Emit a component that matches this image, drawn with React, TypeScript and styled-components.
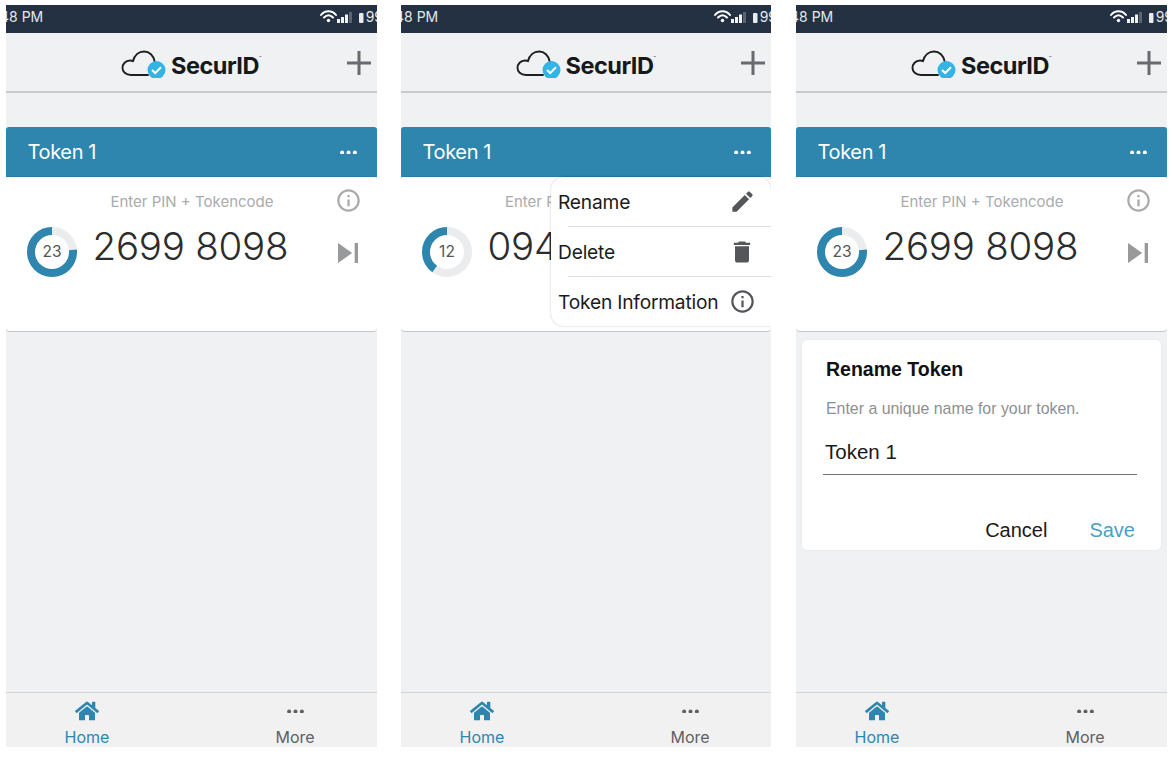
import React from "react";
import styled, { createGlobalStyle } from "styled-components";
import { MdEdit, MdDelete, MdSkipNext, MdInfoOutline } from "react-icons/md";
import { FaHome } from "react-icons/fa";

const Global = createGlobalStyle`
  html, body { margin: 0; padding: 0; background: #fff; }
  body { font-family: "Inter", "Liberation Sans", sans-serif; }
`;

const Page = styled.div`
  width: 1172px; height: 758px; box-sizing: border-box;
  padding: 5px 0 0 6px; display: flex; gap: 24px; overflow: hidden;
`;
const Phone = styled.div`
  position: relative; flex: 0 0 371px; height: 742px; background: #f0f1f3;
  display: flex; flex-direction: column; overflow: hidden;
  &:nth-child(2) { flex-basis: 370px; margin-right: 1px; }
`;
const StatusBar = styled.div`
  flex: 0 0 28px; background: #233143; color: #e4e8ec; font: 400 14px/23px "Inter", sans-serif;
  display: flex; align-items: flex-start; justify-content: space-between; overflow: hidden;
`;
const StatusTime = styled.span`margin-left: -6px;`;
const StatusIcons = styled.div`display: flex; align-items: center; height: 23px; margin-right: -6px; gap: 2px;`;
const Header = styled.div`
  flex: 0 0 58px; display: flex; align-items: center; justify-content: center; position: relative;
  border-bottom: 2px solid #c9cacc;
`;
const Logo = styled.div`display: flex; align-items: center; margin: 7px 0 0 -1px;`;
const LogoSvg = styled.svg`margin-top: -6px; flex: none;`;
const LogoText = styled.span`
  font: 700 23.5px/1 "Inter", sans-serif; color: #17181a; letter-spacing: -.5px; margin-left: 4px;
`;
const Tm = styled.sup`font-size: 4px; font-weight: 400; vertical-align: top; line-height: 8px;`;
const PlusBtn = styled.div`position: absolute; right: 5px; top: 17px; width: 26px; height: 26px; color: #676a6e;`;
const Main = styled.div`flex: 1; padding-top: 34px; display: flex; flex-direction: column;`;
const Card = styled.div`position: relative; display: flex; flex-direction: column;`;
const CardHead = styled.div`
  height: 50px; box-sizing: border-box; background: #2e86ae; color: #fff; border-radius: 3px 3px 0 0;
  display: flex; align-items: center; justify-content: space-between; padding: 0 19px 0 21.500px;
  font: 400 20px/1 "Inter", sans-serif; letter-spacing: -.35px;
`;
const CardBody = styled.div`
  height: 155px; box-sizing: border-box; background: #fff; border-radius: 4px; border-bottom: 1px solid #c6c7c9;
  padding: 12px 17px 0 21px; box-shadow: 0 -1px 1px rgba(0,0,0,.08);
`;
const HintRow = styled.div`display: grid; grid-template-columns: 1fr auto 1fr; align-items: center; height: 24px;`;
const Hint = styled.span`grid-column: 2; font: 400 15px/1 "Inter", sans-serif; color: #aaabad; margin-left: -3px;`;
const InfoSlot = styled.div`grid-column: 3; justify-self: end; color: #a9aaac; display: flex; margin: -2px -2px 0 0;`;
const CodeRow = styled.div`display: flex; align-items: center; margin-top: 14px;`;
const Ring = styled.div`
  display: grid; place-items: center; width: 50px; height: 50px; flex: none;
  & > * { grid-area: 1 / 1; }
`;
const RingNum = styled.span`font: 400 15.5px/1 "Inter", sans-serif; color: #555;`;
const Code = styled.div`
  margin: -11px 0 0 15.500px; flex: 1; font: 300 38.5px/1 "Inter", sans-serif; color: #2c2c2c; letter-spacing: -.25px;
  white-space: nowrap;
`;
const NextSlot = styled.div`color: #97999b; display: flex; margin: 1px -8px 0 0;`;
const Menu = styled.div`
  position: absolute; top: 172px; right: 0; width: 220px; height: 149px; background: #fff;
  border-radius: 13px 13px 0 13px; box-shadow: 0 0 2px rgba(0,0,0,.28);
  display: flex; flex-direction: column;
`;
const MenuItem = styled.div<{ $last?: boolean }>`
  flex: 1; margin-left: 17px; padding: 0 15px 0 0; display: flex; align-items: center; justify-content: space-between;
  border-bottom: ${(p) => (p.$last ? "0" : "1px solid #dcdddf")}; color: #555659;
`;
const MenuLabel = styled.span`margin-left: -10px; font: 400 19.2px/1 "Inter", sans-serif; color: #1b1b1b; letter-spacing: -.2px; padding-top: 2px;`;
const Dialog = styled.div`
  margin: 8px 6px 0; height: 210px; box-sizing: border-box; background: #fff; border-radius: 5px;
  box-shadow: 0 0 2px rgba(0,0,0,.08); padding: 18px 24px 0 24px;
`;
const DialogTitle = styled.div`font: 700 19.5px/1.2 "Liberation Sans", sans-serif; color: #111;`;
const DialogHint = styled.div`font: 400 15.9px/1 "Liberation Sans", sans-serif; color: #8e8f91; margin-top: 20px;`;
const NameField = styled.div`
  margin: 17px 0 0 -3px; height: 41px; box-sizing: border-box; border-bottom: 1px solid #6f7072; padding: 0 2px;
  font: 400 20.5px/35px "Liberation Sans", sans-serif; color: #1a1a1a;
`;
const DialogActions = styled.div`display: flex; justify-content: flex-end; gap: 42px; margin: 45px 2px 0 0;`;
const ActionBtn = styled.span<{ $primary?: boolean }>`
  font: 400 20px/1 "Liberation Sans", sans-serif; color: ${(p) => (p.$primary ? "#4b9fc6" : "#1a1a1a")};
`;
const TabBar = styled.div`
  flex: 0 0 55px; box-sizing: border-box; border-top: 1px solid #d2d3d5; background: #f1f1f2;
  display: flex; gap: 108px; padding-left: 31px;
`;
const Tab = styled.div<{ $active?: boolean }>`
  display: flex; flex-direction: column; align-items: center; width: 100px; height: 100%;
  color: ${(p) => (p.$active ? "#2e86ae" : "#5f6063")};
  font: 400 16px/1 "Inter", sans-serif; justify-content: flex-end; padding-bottom: 2px; box-sizing: border-box;
`;
const TabIcon = styled.div`height: 24px; margin-bottom: 6px; display: flex; align-items: center;`;

const Dots = ({ size = 20, color = "currentColor" }: { size?: number; color?: string }) => (
  <svg width={size} height={size / 4} viewBox="0 0 20 5" fill={color}>
    <circle cx="3.3" cy="2.5" r="2.1" />
    <circle cx="10" cy="2.5" r="2.1" />
    <circle cx="16.7" cy="2.5" r="2.1" />
  </svg>
);

const TimerRing = ({ n }: { n: number }) => (
  <Ring>
    <svg width="50" height="50" viewBox="0 0 50 50">
      <circle cx="25" cy="25" r="21" fill="none" stroke="#ebecee" strokeWidth="8" />
      <circle
        cx="25" cy="25" r="21" fill="none" stroke="#2e86ae" strokeWidth="8"
        pathLength={30} strokeDasharray={`${n} ${30 - n}`} strokeDashoffset={n}
        transform="rotate(-90 25 25)"
      />
    </svg>
    <RingNum>{n}</RingNum>
  </Ring>
);

const StatusGlyphs = () => (
  <StatusIcons>
    <svg width="36" height="16" viewBox="0 0 36 16">
      <g fill="none" stroke="#fff" strokeWidth="2" strokeLinecap="round">
        <path d="M1 6 C5 1 12 1 16 6" />
        <path d="M4 8.5 C7 5.5 10 5.5 13 8.5" />
      </g>
      <circle cx="8.5" cy="11.5" r="1.7" fill="#fff" />
      <g fill="#f0f2f4">
        <rect x="17" y="10" width="3" height="4" />
        <rect x="21" y="8" width="3" height="6" />
        <rect x="25" y="5.5" width="3" height="8.5" />
      </g>
      <rect x="29" y="3" width="3" height="11" fill="#5a6472" />
    </svg>
    <svg width="6" height="16" viewBox="0 0 6 16"><rect x="1" y="4" width="4.5" height="10" rx="1" fill="#e8ebee" /></svg>
    <span>99</span>
  </StatusIcons>
);

const LogoMark = () => (
  <LogoSvg width="46" height="30" viewBox="0 0 46 30">
    <path
      d="M27 27 H10 C4.500 27 1.500 23.500 1.500 20 C1.500 16 4.500 12.500 9 12.500 C10 12.500 11 12.700 12 13 C13.500 7 18 3.500 23 3.500 C28.500 3.500 32.500 7.500 33.500 13"
      fill="none" stroke="#1d1e20" strokeWidth="1.9" strokeLinecap="round"
    />
    <circle cx="35.500" cy="22" r="9" fill="#33b4e5" />
    <path d="M31 22 L34.200 25 L40 19.200" fill="none" stroke="#fff" strokeWidth="2" />
  </LogoSvg>
);

const Top = () => (
  <>
    <StatusBar>
      <StatusTime>48 PM</StatusTime>
      <StatusGlyphs />
    </StatusBar>
    <Header>
      <Logo>
        <LogoMark />
        <LogoText>SecurID<Tm>™</Tm></LogoText>
      </Logo>
      <PlusBtn>
        <svg width="26" height="26" viewBox="0 0 26 26" fill="none" stroke="currentColor" strokeWidth="3">
          <path d="M13 1 V25 M1 13 H25" />
        </svg>
      </PlusBtn>
    </Header>
  </>
);

const Tabs = () => (
  <TabBar>
    <Tab $active>
      <TabIcon><FaHome size={24} /></TabIcon>
      Home
    </Tab>
    <Tab>
      <TabIcon><Dots size={19} /></TabIcon>
      More
    </Tab>
  </TabBar>
);

const TokenCard = ({ n, code }: { n: number; code: string }) => (
  <Card>
    <CardHead>
      Token 1
      <Dots size={19} color="#fff" />
    </CardHead>
    <CardBody>
      <HintRow>
        <Hint>Enter PIN + Tokencode</Hint>
        <InfoSlot><MdInfoOutline size={27} /></InfoSlot>
      </HintRow>
      <CodeRow>
        <TimerRing n={n} />
        <Code>{code}</Code>
        <NextSlot><MdSkipNext size={40} /></NextSlot>
      </CodeRow>
    </CardBody>
  </Card>
);

export default function App() {
  return (
    <>
      <Global />
      <Page>
        <Phone>
          <Top />
          <Main><TokenCard n={23} code="2699 8098" /></Main>
          <Tabs />
        </Phone>
        <Phone>
          <Top />
          <Main><TokenCard n={12} code="0941 2277" /></Main>
          <Menu>
            <MenuItem><MenuLabel>Rename</MenuLabel><MdEdit size={27} /></MenuItem>
            <MenuItem><MenuLabel>Delete</MenuLabel><MdDelete size={28} /></MenuItem>
            <MenuItem $last><MenuLabel>Token Information</MenuLabel><MdInfoOutline size={27} /></MenuItem>
          </Menu>
          <Tabs />
        </Phone>
        <Phone>
          <Top />
          <Main>
            <TokenCard n={23} code="2699 8098" />
            <Dialog>
              <DialogTitle>Rename Token</DialogTitle>
              <DialogHint>Enter a unique name for your token.</DialogHint>
              <NameField>Token 1</NameField>
              <DialogActions>
                <ActionBtn>Cancel</ActionBtn>
                <ActionBtn $primary>Save</ActionBtn>
              </DialogActions>
            </Dialog>
          </Main>
          <Tabs />
        </Phone>
      </Page>
    </>
  );
}
